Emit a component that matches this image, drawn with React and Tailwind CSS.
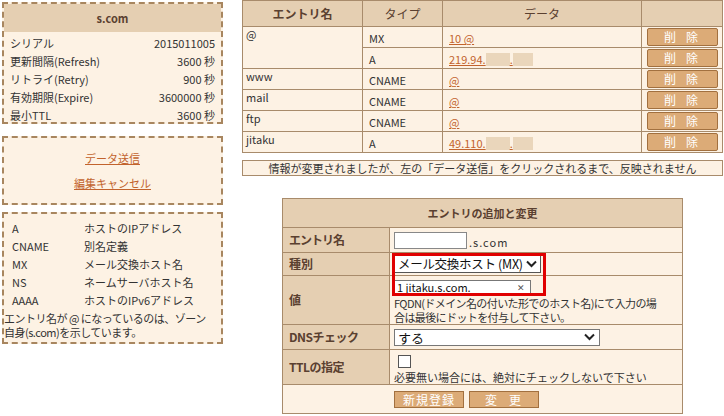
import React from "react";

const jp = { fontFamily: '"Noto Sans CJK JP", "Noto Sans", sans-serif' };

const soa = [
  ["シリアル", "2015011005"],
  ["更新間隔(Refresh)", "3600 秒"],
  ["リトライ(Retry)", "900 秒"],
  ["有効期限(Expire)", "3600000 秒"],
  ["最小TTL", "3600 秒"],
];

const legend = [
  ["A", "ホストのIPアドレス"],
  ["CNAME", "別名定義"],
  ["MX", "メール交換ホスト名"],
  ["NS", "ネームサーバホスト名"],
  ["AAAA", "ホストのIPv6アドレス"],
];

function Redact({ w }) {
  return <span className={`inline-block h-[13px] align-[-2px] bg-[#ead6bb] ${w}`} />;
}

function DelBtn() {
  return (
    <button className="w-[71px] h-[18px] bg-[#dcab77] border border-[#a2703f] rounded-[2px] text-white text-[12px] leading-[16px] tracking-[10px] pl-[8px]">
      削除
    </button>
  );
}

function Chevron() {
  return (
    <svg width="11" height="8" viewBox="0 0 11 8" className="shrink-0">
      <path d="M1 1.5 L5.5 6 L10 1.5" stroke="#222" strokeWidth="2" fill="none" />
    </svg>
  );
}

export default function App() {
  const rows = [
    { name: "@", span: 2, type: "MX", data: <span>10 @</span> },
    { type: "A", data: <span>219.94.<Redact w="w-[24px]" />.<Redact w="w-[20px]" /></span> },
    { name: "www", span: 1, type: "CNAME", data: <span>@</span> },
    { name: "mail", span: 1, type: "CNAME", data: <span>@</span> },
    { name: "ftp", span: 1, type: "CNAME", data: <span>@</span> },
    { name: "jitaku", span: 1, type: "A", data: <span>49.110.<Redact w="w-[24px]" />.<Redact w="w-[20px]" /></span> },
  ];

  return (
    <div className="w-[724px] h-[416px] bg-white flex text-[11px] text-[#333] overflow-hidden" style={jp}>
      {/* LEFT */}
      <div className="w-[221px] ml-[2px] mt-[2px] flex flex-col">
        <div className="border-2 border-dashed border-[#a8865f] bg-[#fdf2e4] h-[122px]">
          <div className="h-[28px] bg-[#e5cfb2] flex items-center justify-center font-bold text-[11px] text-[#5a4030]">s.com</div>
          <div className="px-[6px] pt-[2px]">
            {soa.map(([k, v]) => (
              <div key={k} className="flex justify-between h-[18px] leading-[18px]">
                <span>{k}</span>
                <span>{v}</span>
              </div>
            ))}
          </div>
        </div>

        <div className="mt-[12px] h-[69px] border-2 border-dashed border-[#a8865f] bg-[#fdf2e4] flex flex-col items-center pt-[11px] gap-[7px] text-[#c2632d]">
          <a className="underline leading-[18px]">データ送信</a>
          <a className="underline leading-[18px]">編集キャンセル</a>
        </div>

        <div className="mt-[7px] h-[132px] border-2 border-dashed border-[#a8865f] bg-[#fdf2e4] pt-[5px]">
          {legend.map(([k, v]) => (
            <div key={k} className="flex h-[18px] leading-[18px]">
              <span className="w-[80px] pl-[8px]">{k}</span>
              <span>{v}</span>
            </div>
          ))}
          <div className="pt-[2px] whitespace-nowrap tracking-[-0.5px] leading-[14px]">
            <div>エントリ名が @ になっているのは、ゾーン</div>
            <div>自身(s.com)を示しています。</div>
          </div>
        </div>
      </div>

      {/* RIGHT */}
      <div className="ml-[19px] w-[481px] relative">
        <table className="w-[481px] border-collapse border border-[#a88b6b] bg-[#fdf2e4]">
          <thead>
            <tr className="h-[26px] bg-[#e5cfb2] text-[#5a4030] text-[12px]">
              <th className="w-[120px] border border-[#a88b6b] font-bold">エントリ名</th>
              <th className="w-[80px] border border-[#a88b6b] font-normal">タイプ</th>
              <th className="w-[199px] border border-[#a88b6b] font-normal">データ</th>
              <th className="border border-[#a88b6b]"></th>
            </tr>
          </thead>
          <tbody>
            {rows.map((r, i) => (
              <tr key={i} className="h-[21px]">
                {r.name && (
                  <td rowSpan={r.span} className="border border-[#a88b6b] align-top px-[3px] leading-[14px]">
                    {r.name}
                  </td>
                )}
                <td className="border border-[#a88b6b] px-[6px] pt-[2px] leading-[16px]">{r.type}</td>
                <td className="border border-[#a88b6b] px-[6px] pt-[2px] leading-[16px] text-[#c2632d] underline">{r.data}</td>
                <td className="border border-[#a88b6b] text-center leading-none py-[1px]">
                  <DelBtn />
                </td>
              </tr>
            ))}
          </tbody>
        </table>

        <div className="mt-[7px] h-[16px] border border-[#a88b6b] bg-[#fdf2e4] text-center leading-[14px] whitespace-nowrap">
          情報が変更されましたが、左の「データ送信」をクリックされるまで、反映されません
        </div>

        <div className="mt-[22px] ml-[40px] w-[401px] relative">
          <table className="w-full border-collapse border border-[#a88b6b] bg-[#fdf2e4]">
            <tbody>
              <tr className="h-[29px] bg-[#e5cfb2]">
                <th colSpan={2} className="border border-[#a88b6b] text-[#5a4030] font-bold">エントリの追加と変更</th>
              </tr>
              <tr className="h-[25px]">
                <th className="w-[107px] bg-[#e5cfb2] border border-[#a88b6b] text-left pl-[6px] text-[#5a4030] text-[12px] tracking-[-1px]">エントリ名</th>
                <td className="border border-[#a88b6b] pl-[4px]">
                  <div className="flex items-end gap-[2px]">
                    <span className="inline-block w-[73px] h-[17px] bg-white border border-[#888]" />
                    <span className="leading-[14px] tracking-[1px]">.s.com</span>
                  </div>
                </td>
              </tr>
              <tr className="h-[23px]">
                <th className="bg-[#e5cfb2] border border-[#a88b6b] text-left pl-[6px] text-[#5a4030] text-[12px]">種別</th>
                <td className="border border-[#a88b6b] pl-[4px]">
                  <div className="w-[147px] h-[18px] bg-white border border-[#555] flex items-center justify-between pl-[3px] pr-[3px] text-[12.5px] tracking-[-0.3px] leading-none text-[#111] whitespace-nowrap">
                    <span>メール交換ホスト (MX)</span>
                    <Chevron />
                  </div>
                </td>
              </tr>
              <tr className="h-[48px]">
                <th className="bg-[#e5cfb2] border border-[#a88b6b] text-left pl-[6px] text-[#5a4030] text-[12px]">値</th>
                <td className="border border-[#a88b6b] pl-[4px] pt-[4px] align-top">
                  <div className="w-[137px] h-[15px] bg-white border border-[#777] flex items-center justify-between pl-[2px] pr-[5px] leading-none text-[#111] whitespace-nowrap">
                    <span>1 jitaku.s.com.</span>
                    <span className="text-[9px] text-[#555]">✕</span>
                  </div>
                  <div className="pt-[1px] whitespace-nowrap tracking-[-0.6px] leading-[14px]">
                    <div>FQDN(ドメイン名の付いた形でのホスト名)にて入力の場</div>
                    <div>合は最後にドットを付与して下さい。</div>
                  </div>
                </td>
              </tr>
              <tr className="h-[25px]">
                <th className="bg-[#e5cfb2] border border-[#a88b6b] text-left pl-[6px] text-[#5a4030] text-[12px] tracking-[-0.5px]">DNSチェック</th>
                <td className="border border-[#a88b6b] pl-[4px]">
                  <div className="w-[206px] h-[17px] bg-white border border-[#777] flex items-center justify-between pl-[3px] pr-[4px] text-[13px] leading-none text-[#111]">
                    <span>する</span>
                    <Chevron />
                  </div>
                </td>
              </tr>
              <tr className="h-[35px]">
                <th className="bg-[#e5cfb2] border border-[#a88b6b] text-left pl-[6px] text-[#5a4030] text-[12px] tracking-[-0.5px]">TTLの指定</th>
                <td className="border border-[#a88b6b] pl-[4px] align-top pt-[5px]">
                  <span className="block ml-[4px] w-[13px] h-[13px] bg-white border border-[#555]" />
                  <div className="leading-[14px] pt-[2px] whitespace-nowrap">必要無い場合には、絶対にチェックしないで下さい</div>
                </td>
              </tr>
              <tr className="h-[29px]">
                <td colSpan={2} className="border border-[#a88b6b]">
                  <div className="flex justify-center gap-[5px] pr-[32px]">
                    <button className="w-[70px] h-[17px] bg-[#dcab77] border border-[#a2703f] text-white text-[12px] leading-[15px] tracking-[1px]">新規登録</button>
                    <button className="w-[70px] h-[17px] bg-[#dcab77] border border-[#a2703f] text-white text-[12px] leading-[15px] tracking-[12px] pl-[10px]">変更</button>
                  </div>
                </td>
              </tr>
            </tbody>
          </table>
          {/* highlight annotation */}
          <div className="absolute left-[110px] top-[55px] w-[154px] h-[43px] border-[3px] border-[#e00000] pointer-events-none" />
        </div>
      </div>
    </div>
  );
}
